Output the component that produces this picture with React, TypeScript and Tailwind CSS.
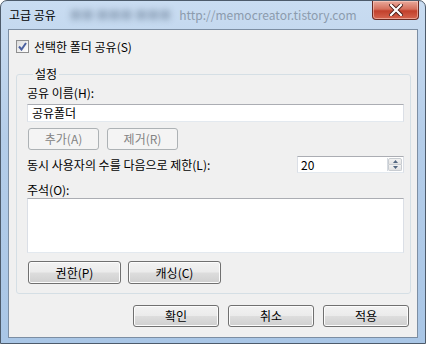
import React from "react";

const font = { fontFamily: '"Noto Sans CJK KR", "Noto Sans", sans-serif' };

const btn =
  "h-[22px] rounded-[3px] border border-[#707070] bg-[linear-gradient(#f2f2f2_0%,#ebebeb_48%,#dddddd_52%,#cfcfcf_100%)] text-[12px] leading-[14px] text-black flex items-center justify-center shadow-[inset_0_0_0_1px_#fcfcfc]";

const btnOff =
  "h-[22px] rounded-[3px] border border-[#adb2b5] bg-[#f4f4f4] text-[12px] leading-[14px] text-[#838383] flex items-center justify-center";

const field = "border border-[#abadb3] border-x-[#dbdfe6] border-b-[#e3e9ef] bg-white";

function CloseButton() {
  return (
    <div className="w-[47px] h-[19px] mr-[6px] rounded-b-[4px] border border-t-0 border-[#6b2b23] bg-[linear-gradient(#e9a99b_0%,#d5705d_45%,#c2402c_55%,#d5654f_100%)] flex items-center justify-center shadow-[inset_0_0_0_1px_rgba(255,220,210,0.5)]">
      <svg width="14" height="12" viewBox="0 0 14 12">
        <path d="M2 1 L12 11 M12 1 L2 11" stroke="#4a1d17" strokeWidth="4" strokeLinecap="square" />
        <path d="M2 1 L12 11 M12 1 L2 11" stroke="#ffffff" strokeWidth="2.2" strokeLinecap="square" />
      </svg>
    </div>
  );
}

function Checkbox() {
  return (
    <div className="w-[13px] h-[13px] border border-[#8f8f8f] bg-[linear-gradient(135deg,#dcdcdc,#ffffff)] flex items-center justify-center">
      <svg width="9" height="9" viewBox="0 0 9 9">
        <path d="M1 4.5 L3.5 7.5 L8 1" fill="none" stroke="#4c61a0" strokeWidth="2" />
      </svg>
    </div>
  );
}

function Spin() {
  return (
    <div className={`${field} w-[107px] h-[17px] flex items-stretch`}>
      <div className="flex-1 pl-[3px] text-[12px] leading-[15px]">20</div>
      <div className="w-[15px] flex flex-col border-l border-[#d6dbe1] my-[1px] mr-[1px]">
        <div className="flex-1 flex items-center justify-center bg-[linear-gradient(#f3f3f3,#e2e2e2)] border border-[#c8ccd1] rounded-t-[2px]">
          <svg width="5" height="3" viewBox="0 0 5 3">
            <path d="M0 3 L2.5 0 L5 3Z" fill="#51657f" />
          </svg>
        </div>
        <div className="flex-1 flex items-center justify-center bg-[linear-gradient(#f3f3f3,#e2e2e2)] border border-t-0 border-[#c8ccd1] rounded-b-[2px]">
          <svg width="5" height="3" viewBox="0 0 5 3">
            <path d="M0 0 L2.5 3 L5 0Z" fill="#51657f" />
          </svg>
        </div>
      </div>
    </div>
  );
}

export default function App() {
  return (
    <div
      className="w-[426px] h-[344px] overflow-hidden rounded-t-[7px] border border-[#4d5b6b] bg-[linear-gradient(#c9dcf1,#b4cde9_40%,#a9c6e6)] flex flex-col"
      style={font}
    >
      {/* title bar */}
      <div className="h-[28px] flex items-start">
        <div className="h-[27px] pl-[8px] flex items-center text-[12px] leading-[14px] text-black">고급 공유</div>
        <div className="h-[27px] flex-1 min-w-0 flex items-center pl-[14px] text-[12px] gap-[8px]">
          <span className="blur-[3px] text-[#52677f] opacity-40 whitespace-nowrap">■■ ■■■ ■■■</span>
          <span className="text-[#8c9bad] whitespace-nowrap">http://memocreator.tistory.com</span>
        </div>
        <CloseButton />
      </div>

      {/* client area */}
      <div className="flex-1 mx-[7px] mb-[5px] border border-[#7c8ea3] bg-[#f0f0f0] flex flex-col text-[12px] leading-[14px] text-black">
        <div className="mt-[10px] ml-[7px] flex items-center gap-[5px] h-[13px]">
          <Checkbox />
          <span>선택한 폴더 공유(S)</span>
        </div>

        <fieldset className="mt-[14px] ml-[7px] mr-[6px] h-[227px] border border-[#d5dfe5] rounded-[3px] pl-[10px] pr-[6px] flex flex-col">
          <legend className="ml-[6px] px-[2px] leading-[14px]">설정</legend>
          <div className="mt-[5px]">공유 이름(H):</div>
          <div className={`${field} mt-[4px] h-[18px] pl-[4px] leading-[16px]`}>공유폴더</div>
          <div className="mt-[6px] flex gap-[8px] pl-[1px]">
            <div className={`${btnOff} w-[71px]`}>추가(A)</div>
            <div className={`${btnOff} w-[71px]`}>제거(R)</div>
          </div>
          <div className="mt-[6px] flex items-center justify-between">
            <span>동시 사용자의 수를 다음으로 제한(L):</span>
            <Spin />
          </div>
          <div className="mt-[10px]">주석(O):</div>
          <div className={`${field} mt-[1px] h-[55px]`} />
          <div className="mt-[8px] flex gap-[7px] pl-[1px]">
            <div className={`${btn} w-[93px] h-[23px] border-[#3c7fb1] shadow-[inset_0_0_0_1px_#74c8ef]`}>권한(P)</div>
            <div className={`${btn} w-[93px] h-[23px]`}>캐싱(C)</div>
          </div>
        </fieldset>

        <div className="mt-[11px] mr-[8px] flex justify-end gap-[9px]">
          <div className={`${btn} w-[86px]`}>확인</div>
          <div className={`${btn} w-[86px]`}>취소</div>
          <div className={`${btn} w-[86px]`}>적용</div>
        </div>
      </div>
    </div>
  );
}
